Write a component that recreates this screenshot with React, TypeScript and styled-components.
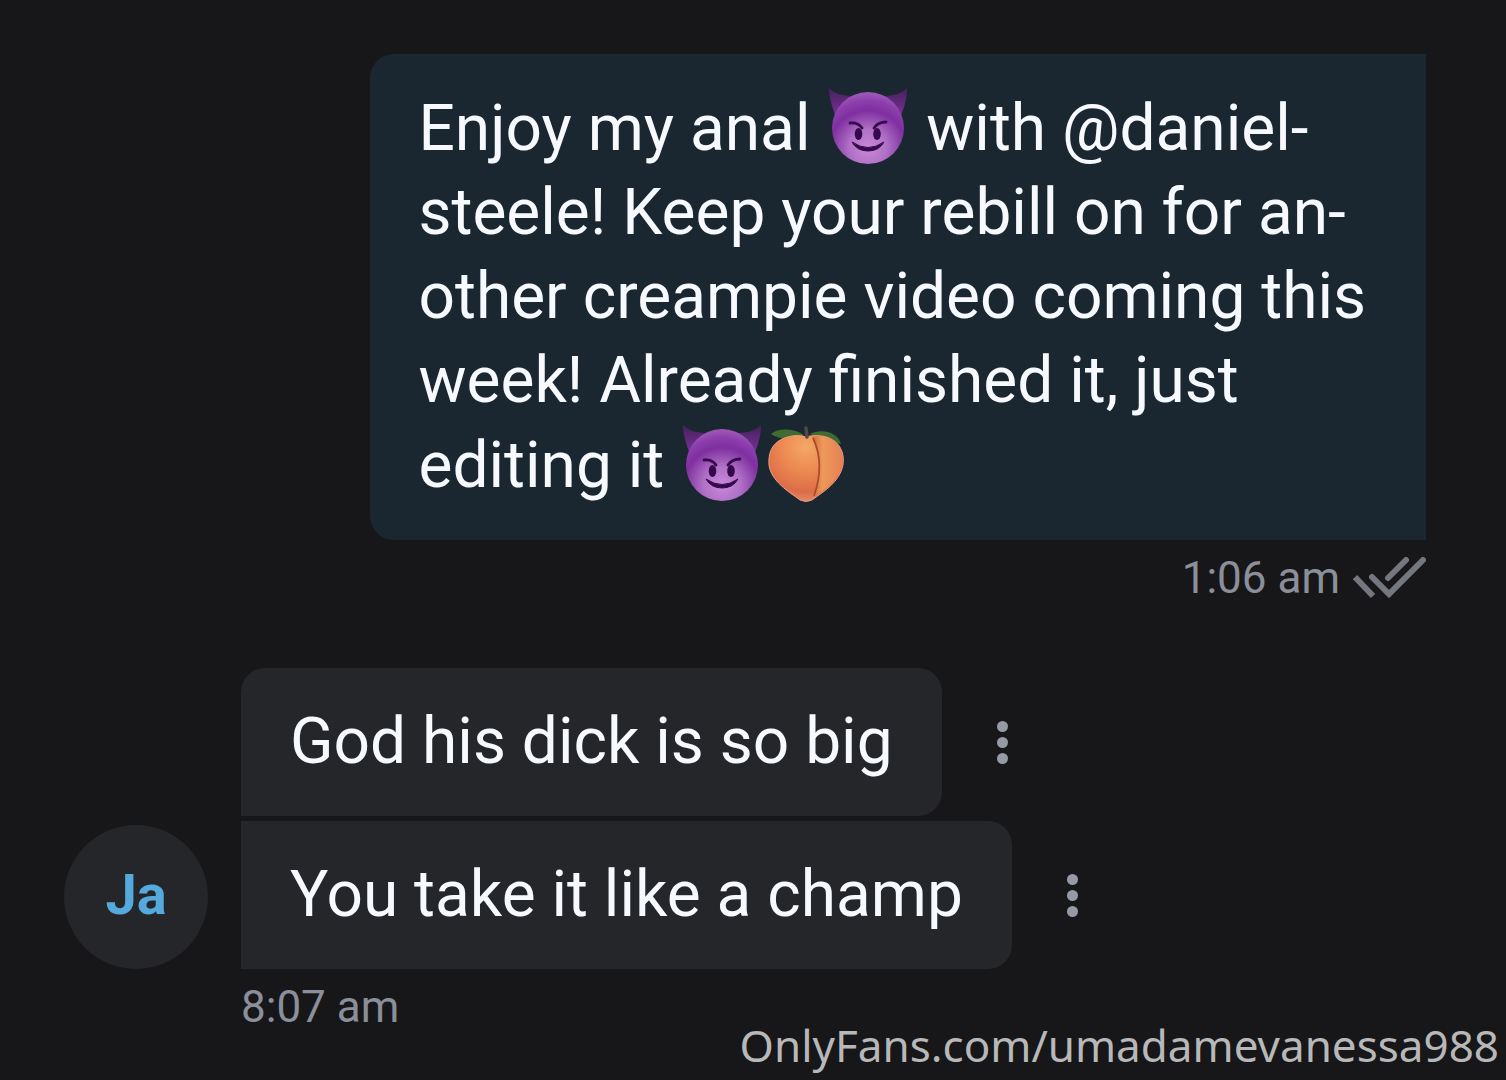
import React from "react";
import styled, { createGlobalStyle } from "styled-components";

const GlobalStyle = createGlobalStyle`
  *, *::before, *::after { box-sizing: border-box; }
  body {
    margin: 0;
    background: #171719;
    color: #f6f9fd;
    font-family: Roboto, "Liberation Sans", sans-serif;
  }
`;

const Chat = styled.main`
  display: flex;
  flex-direction: column;
  gap: 64px;
  min-height: 100vh;
  padding: 54px 80px 40px 64px;
`;

const Outgoing = styled.section`
  display: flex;
  flex-direction: column;
  align-items: flex-end;
`;

const Incoming = styled.section`
  display: grid;
  grid-template-columns: 144px 1fr;
  column-gap: 33px;
`;

const Thread = styled.div`
  display: flex;
  flex-direction: column;
  gap: 5px;
`;

const MessageRow = styled.div`
  display: flex;
  align-items: center;
  gap: 39px;
`;

const Bubble = styled.p<{ $kind: "sent" | "first" | "last" }>`
  margin: 0;
  padding: ${(p) => (p.$kind === "sent" ? "32px 60px 32px 48px" : "32px 49px")};
  font-size: 64px;
  line-height: 84px;
  background: ${(p) => (p.$kind === "sent" ? "#1a2730" : "#252629")};
  border-radius: ${(p) =>
    ({ sent: "24px 0 0 24px", first: "24px 24px 24px 0", last: "0 24px 24px 0" })[p.$kind]};
`;

const Meta = styled.div<{ $indented?: boolean }>`
  display: flex;
  align-items: center;
  gap: 13px;
  margin-top: 12px;
  font-size: 44px;
  line-height: 52px;
  color: #8a8f99;
  ${(p) => p.$indented && "grid-column: 2;"}
`;

const Avatar = styled.a`
  display: flex;
  align-items: center;
  justify-content: center;
  align-self: end;
  height: 144px;
  padding-bottom: 4px;
  border-radius: 50%;
  background: #252629;
  color: #55a9dc;
  font-size: 56px;
  font-weight: 700;
  text-decoration: none;
`;

const MenuButton = styled.button`
  display: flex;
  flex-direction: column;
  align-items: center;
  justify-content: center;
  gap: 5px;
  width: 44px;
  height: 64px;
  padding: 0;
  border: 0;
  background: none;
  cursor: pointer;
`;

const Dot = styled.span`
  width: 11px;
  height: 11px;
  border-radius: 50%;
  background: #959aa4;
`;

const EmojiSvg = styled.svg`
  width: 84px;
  height: 78px;
  overflow: visible;
  vertical-align: -14px;
`;

const Watermark = styled.div`
  position: absolute;
  right: 7px;
  bottom: 5px;
  color: #b8b8b9;
  font-family: "Noto Sans", "Open Sans", sans-serif;
  font-size: 44px;
  line-height: 60px;
`;

function Devil({ id }: { id: string }) {
  return (
    <EmojiSvg viewBox="0 0 84 78" role="img" aria-label="😈">
      <defs>
        <radialGradient id={`${id}-face`} gradientUnits="userSpaceOnUse" cx="42" cy="62" r="54">
          <stop offset="0" stopColor="#c88ad9" />
          <stop offset="0.35" stopColor="#b070c6" />
          <stop offset="0.7" stopColor="#7f2fa0" />
          <stop offset="0.88" stopColor="#8c3fac" />
          <stop offset="1" stopColor="#9c55b6" />
        </radialGradient>
        <linearGradient id={`${id}-horn`} x1="0" y1="0" x2="0" y2="1">
          <stop offset="0" stopColor="#43205c" />
          <stop offset="1" stopColor="#7d3299" />
        </linearGradient>
      </defs>
      <path d="M3 1.5C8 8 17 10 28 10L10 31C6 21 3 11 3 1.5Z" fill={`url(#${id}-horn)`} />
      <path d="M81 1.5C76 8 67 10 56 10L74 31C79 21 81 11 81 1.5Z" fill={`url(#${id}-horn)`} />
      <circle cx="42" cy="42" r="36" fill={`url(#${id}-face)`} />
      <g fill="none" stroke="#35084b" strokeWidth="2.8" strokeLinecap="round">
        <path d="M24 37Q32 36 36 42" />
        <path d="M60 36Q52 36 48 42" />
      </g>
      <ellipse cx="32.5" cy="48" rx="3.8" ry="6" fill="#35084b" />
      <ellipse cx="51" cy="48" rx="3.8" ry="6" fill="#35084b" />
      <path d="M26 56Q42 67 58 56Q53 65 42 65Q31 65 26 56Z" fill="#35084b" stroke="#35084b" strokeWidth="1" strokeLinejoin="round" />
    </EmojiSvg>
  );
}

function Peach() {
  return (
    <EmojiSvg viewBox="0 0 84 78" role="img" aria-label="🍑">
      <defs>
        <radialGradient id="peach-body" gradientUnits="userSpaceOnUse" cx="42" cy="24" r="56">
          <stop offset="0" stopColor="#f4a866" />
          <stop offset="0.45" stopColor="#ec8852" />
          <stop offset="0.8" stopColor="#dc6d47" />
          <stop offset="1" stopColor="#e28e6f" />
        </radialGradient>
        <linearGradient id="peach-lobe" x1="0" y1="0" x2="1" y2="0">
          <stop offset="0" stopColor="#d06b3b" />
          <stop offset="0.35" stopColor="#ee985a" />
          <stop offset="1" stopColor="#e68154" />
        </linearGradient>
      </defs>
      <path d="M7 11C14 5 29 5 40 12C30 17 15 17 7 11Z" fill="#3f6c30" />
      <path d="M46 11C57 5 74 9 77 21C68 18 56 16 46 11Z" fill="#3f6c30" />
      <path d="M42 14C34 11 25 13 18 16C8 21 4 30 5 42C7 58 25 69 36 77Q42 80 48 77C59 69 76 59 79 42C81 29 75 19 65 15C58 12 49 12 42 14Z" fill="url(#peach-body)" stroke="#e99b7e" strokeWidth="1" />
      <path d="M48 14C55 12 61 13 65 16C75 19 80 30 78 42C76 57 60 67 50 74C56 56 58 30 48 14Z" fill="url(#peach-lobe)" />
      <path d="M49 15C57 32 57 53 50 73" fill="none" stroke="#a94d29" strokeWidth="1.8" />
      <path d="M42 5L43 14" stroke="#4c4a46" strokeWidth="3.5" strokeLinecap="round" />
    </EmojiSvg>
  );
}

function ReadTicks() {
  return (
    <svg width="73" height="42" viewBox="0 0 73 42" fill="none" stroke="#74777e" strokeWidth="6" role="img" aria-label="Read">
      <path d="M2 20L20 39" />
      <path d="M19 20L36 37L70 3" strokeLinecap="round" />
      <path d="M53 3L35 21" strokeLinecap="round" />
    </svg>
  );
}

function MessageMenu() {
  return (
    <MenuButton type="button" aria-label="Message options">
      <Dot />
      <Dot />
      <Dot />
    </MenuButton>
  );
}

export default function App() {
  return (
    <>
      <GlobalStyle />
      <Chat>
        <Outgoing>
          <Bubble $kind="sent">
            Enjoy my anal <Devil id="devil-a" /> with @daniel-
            <br />
            steele! Keep your rebill on for an-
            <br />
            other creampie video coming this
            <br />
            week! Already finished it, just
            <br />
            editing it <Devil id="devil-b" />
            <Peach />
          </Bubble>
          <Meta>
            <time>1:06 am</time>
            <ReadTicks />
          </Meta>
        </Outgoing>
        <Incoming>
          <Avatar href="#profile">Ja</Avatar>
          <Thread>
            <MessageRow>
              <Bubble $kind="first">God his dick is so big</Bubble>
              <MessageMenu />
            </MessageRow>
            <MessageRow>
              <Bubble $kind="last">You take it like a champ</Bubble>
              <MessageMenu />
            </MessageRow>
          </Thread>
          <Meta $indented>
            <time>8:07 am</time>
          </Meta>
        </Incoming>
      </Chat>
      <Watermark>OnlyFans.com/umadamevanessa988</Watermark>
    </>
  );
}
